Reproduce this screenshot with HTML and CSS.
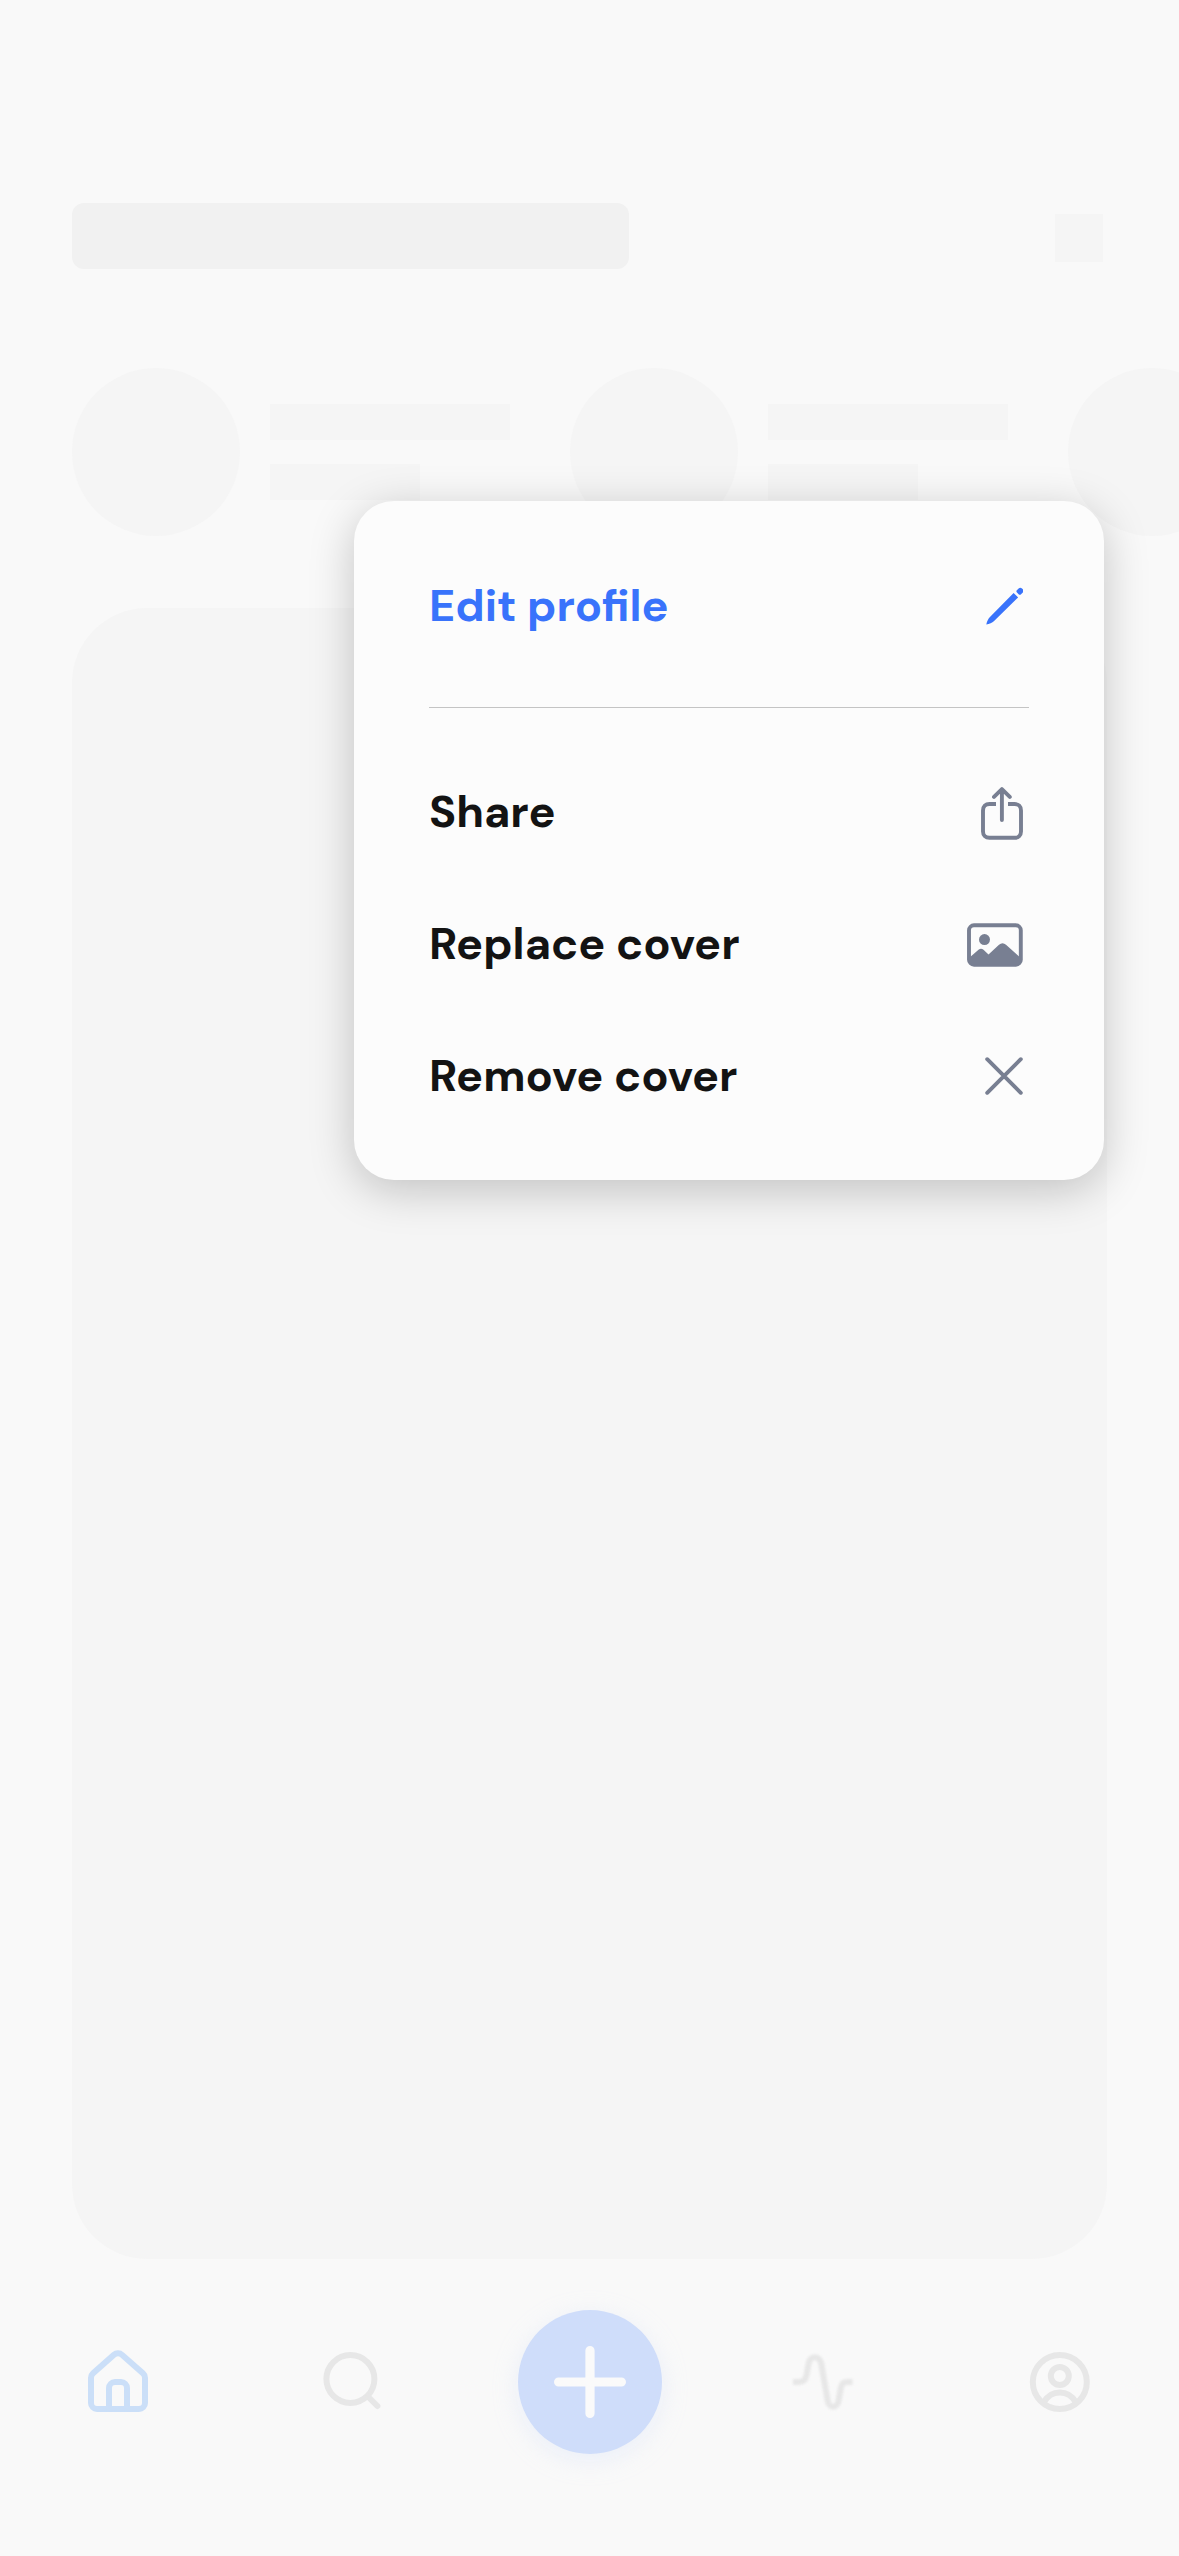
FILE: index.html
```html
<!DOCTYPE html>
<html lang="en">
<head>
<meta charset="utf-8">
<title>Profile</title>
<link rel="stylesheet" href="styles.css">
</head>
<body>
<div class="screen">
  <header class="header">
    <div class="title-placeholder"></div>
    <div class="action-placeholder"></div>
  </header>
  <section class="stories">
    <div class="story"><div class="avatar"></div><div class="lines"><div class="line"></div><div class="line short"></div></div></div>
    <div class="story"><div class="avatar"></div><div class="lines"><div class="line"></div><div class="line short"></div></div></div>
    <div class="story"><div class="avatar"></div></div>
  </section>
  <main class="cover"></main>
  <nav class="tabs">
    <a class="tab home"><svg viewBox="0 0 24 24"><path d="M3 10.6c0-.6.25-1.1.7-1.5l6.95-6.15a2 2 0 0 1 2.7 0L20.3 9.1c.45.4.7.9.7 1.5V19a2 2 0 0 1-2 2H5a2 2 0 0 1-2-2z"/><path d="M9 21v-7a2 2 0 0 1 2-2h2a2 2 0 0 1 2 2v7"/></svg></a>
    <a class="tab"><svg viewBox="0 0 24 24"><circle cx="10.8" cy="11" r="8"/><path d="m16.800 17 3 3"/></svg></a>
    <a class="tab"><span class="add"><svg viewBox="0 0 72 72"><path d="M36 4.6v62.8M4.6 36h62.8"/></svg></span></a>
    <a class="tab"><svg class="pulse" viewBox="0 0 72 72"><path d="M4 36h5.500c4.500 0 7-1.500 8-7l2-11c1.400-9 11.200-9 12.800 0l6.200 36c1.400 9 9.800 9 11.200 0l2-11c1-5.500 2.500-7 7-7h4.800"/></svg></a>
    <a class="tab"><svg viewBox="0 0 24 24"><circle cx="11.600" cy="12" r="9"/><circle cx="11.600" cy="10" r="3"/><path d="M6.200 18.800c2.600-4.400 8.200-4.400 10.800 0"/></svg></a>
  </nav>

  <div class="menu" role="menu">
    <div class="item primary" role="menuitem"><span class="label">Edit profile</span>
      <svg width="38" height="38" viewBox="0 0 38 38"><path d="M1.300 37.400c.6-3.200 1.900-5.700 3.900-7.700L28.600 5.900l4.500 4.500L9.100 34.100c-2 1.900-4.600 2.900-7.800 3.300z"/><path d="m31.600 3.400 2-2q1.700-1.500 3.400 0l.8.8q1.500 1.700 0 3.400l-2 2q-1.100.7-2.200-.4l-1.600-1.600q-1-1.100-.4-2.200z"/></svg></div>
    <div class="divider"></div>
    <div class="item" role="menuitem"><span class="label share">Share</span>
      <svg width="42" height="53" viewBox="0 0 42 53"><path class="butt" d="M15 17H8.500C4.500 17 2 19.300 2 23.500V44.500c0 4 2.500 6.300 6.500 6.300h25c4 0 6.500-2.300 6.500-6.300V23.500C40 19.300 37.500 17 33.500 17H27"/><path d="M20.900 33V2.500M13 9.900l7.900-7.800 7.900 7.800"/></svg></div>
    <div class="item" role="menuitem"><span class="label">Replace cover</span>
      <svg class="image" width="56" height="44" viewBox="0 0 56 44"><rect x="2" y="2.300" width="51.800" height="39.400" rx="5"/><circle cx="17.500" cy="16.600" r="5.500"/><path d="m2 35 9.500-8.300q2.500-1.800 5 0l5 4.800L32 21.800q3.500-3 7 0L53.800 35v1.500q0 5-5 5H7q-5 0-5-5z"/></svg></div>
    <div class="item" role="menuitem"><span class="label">Remove cover</span>
      <svg width="38" height="38" viewBox="0 0 38 38"><path d="m2.200 2.200 33.600 33.600M35.800 2.200 2.200 35.800"/></svg></div>
  </div>
</div>
</body>
</html>
```

FILE: styles.css
```css
* { box-sizing: border-box; }

body {
  margin: 0;
  background: #f9f9f9;
  font-family: "DM Sans", Inter, sans-serif;
}

.screen {
  position: relative;
  width: 1179px;
  height: 2556px;
  padding-top: 203px;
  overflow: hidden;
}

.header {
  display: flex;
  justify-content: space-between;
  align-items: center;
  padding: 0 76px 0 72px;
}

.title-placeholder {
  width: 557px;
  height: 66px;
  border-radius: 12px;
  background: #f1f1f1;
}

.action-placeholder {
  width: 48px;
  height: 48px;
  margin-top: 4px;
  background: #f5f5f5;
}

.stories {
  display: flex;
  gap: 60px;
  margin: 99px 0 0 72px;
}

.story {
  display: flex;
  flex: none;
  align-items: center;
  gap: 30px;
}

.avatar {
  width: 168px;
  height: 168px;
  border-radius: 50%;
  background: #f5f5f5;
}

.lines {
  display: grid;
  gap: 24px;
}

.line {
  width: 240px;
  height: 36px;
  background: #f5f5f5;
}

.line.short { width: 150px; }

.cover {
  height: 1651px;
  margin: 72px 72px 51px;
  border-radius: 75px;
  background: #f5f5f5;
}

.tabs {
  display: grid;
  grid-template-columns: repeat(5, 1fr);
  height: 144px;
}

.tab {
  display: grid;
  place-items: center;
  color: #e7e7e7;
}

.tab svg {
  width: 72px;
  height: 72px;
  fill: none;
  stroke: currentColor;
  stroke-width: 2;
  stroke-linecap: round;
  stroke-linejoin: round;
}

.tab.home { color: #cbdff8; }

.tab svg.pulse {
  stroke-width: 6;
  stroke-linecap: butt;
  filter: blur(0.8px);
}

.add {
  display: grid;
  place-items: center;
  width: 144px;
  height: 144px;
  margin-left: 1px;
  border-radius: 50%;
  background: #cfddfa;
  color: #fafafa;
  box-shadow: 0 6px 24px rgba(207, 221, 250, 0.35);
}

.tab .add svg { stroke-width: 9.2; }

/* Context menu floating above the skeleton */
.menu {
  position: absolute;
  top: 501px;
  left: 354px;
  width: 750px;
  height: 679px;
  padding: 39px 75px 0;
  border-radius: 40px;
  background: #fcfcfc;
  box-shadow: 0 10px 45px rgba(0, 0, 0, 0.215);
}

.item {
  display: flex;
  align-items: center;
  justify-content: space-between;
  height: 131.5px;
  padding-right: 6px;
  color: #131313;
}

.item.primary {
  height: 132px;
  color: #3973fb;
}

.item svg {
  flex: none;
  fill: none;
  stroke: #787f92;
  stroke-width: 3.9;
  stroke-linecap: round;
  stroke-linejoin: round;
}

.item .butt { stroke-linecap: butt; }

.item.primary svg {
  fill: #3973fb;
  stroke: none;
}

.item .image { margin-top: 1px; }

.item .image circle,
.item .image path {
  fill: #787f92;
  stroke: none;
}

.divider {
  height: 1px;
  margin: 35px 0 39.5px;
  background: #c4c4c4;
}

.label {
  padding-bottom: 1px;
  font-size: 45px;
  font-weight: 700;
  line-height: 60px;
  white-space: nowrap;
}

.label.share { padding-bottom: 3px; }
```
